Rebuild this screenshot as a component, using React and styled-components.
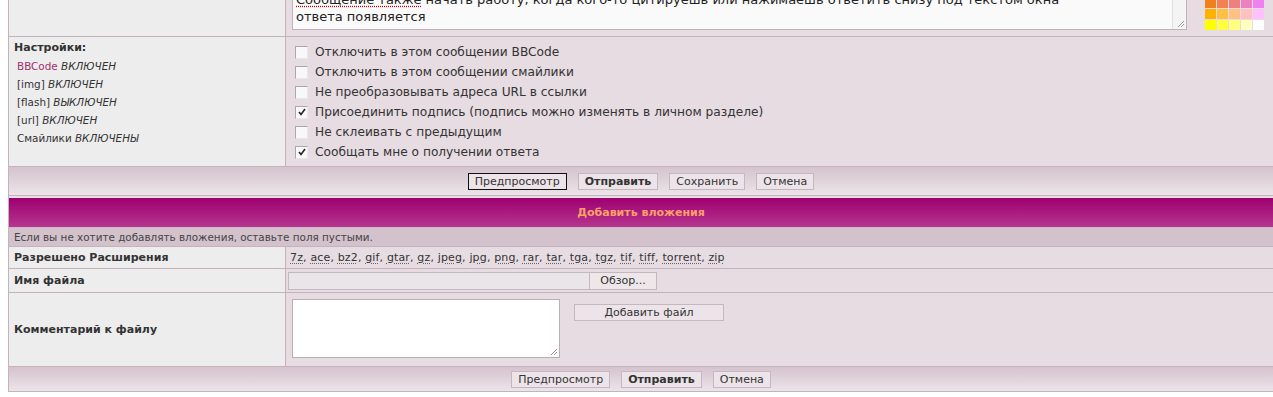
import styled, { createGlobalStyle } from "styled-components"

const GlobalStyle = createGlobalStyle`
    html, body {
        margin: 0;
        padding: 0;
        background: #ffffff;
        overflow: hidden;
    }
    body {
        padding-left: 8px;
        font-family: "DejaVu Sans", Verdana, sans-serif;
        color: #333333;
    }
`

const colors = {
    light: '#ededed',
    pink: '#e6dce2',
    line: '#c4b3bc',
    magentaTop: '#9e0070',
    magentaBottom: '#b5368f',
}

const Forum = styled.div`
    margin-top: -20px;
    border-left: 1px solid ${colors.line};
`

const Row = styled.div`
    display: grid;
    grid-template-columns: 277px 1fr;
    border-bottom: 1px solid ${colors.line};
`

const LeftCell = styled.div`
    background: ${colors.light};
    border-right: 1px solid ${colors.line};
    padding: ${({pad}) => pad || '0 5px'};
    display: flex;
    flex-direction: column;
    justify-content: ${({top}) => top ? 'flex-start' : 'center'};
    font-size: 11px;
    font-weight: ${({bold}) => bold ? 'bold' : 'normal'};
`

const RightCell = styled.div`
    background: ${colors.pink};
    padding: ${({pad}) => pad || '0 4px'};
    display: flex;
    align-items: ${({align}) => align || 'center'};
    gap: ${({gap}) => gap || '0'};
`

const PostArea = styled.div`
    width: 895px;
    height: 50px;
    margin-left: 2px;
    background: #fafafa;
    border: 1px solid #bfb2b8;
    position: relative;
    font-size: 13px;
    line-height: 17px;
    padding: 10px 20px 0 3px;
    box-sizing: border-box;
    color: #222;
    overflow: hidden;
    white-space: nowrap;
`

const Spell = styled.span`
    text-decoration: underline dotted #c00000;
    text-underline-offset: 2px;
`

const Scroll = styled.div`
    position: absolute;
    right: 0;
    top: 0;
    bottom: 0;
    width: 13px;
    border-left: 1px solid #e0e0e0;
    background: #f4f4f4;
`

const Grip = styled.svg`
    position: absolute;
    right: 1px;
    bottom: 1px;
`

const Palette = styled.div`
    margin-left: 18px;
    display: grid;
    grid-template-columns: repeat(5, 11px);
    grid-auto-rows: 10px;
    gap: 1px;
`

const Swatch = styled.div`
    background: ${({c}) => c};
`

const SettingsTitle = styled.div`
    font-weight: bold;
    font-size: 11px;
    margin: 4px 0 3px;
`

const SettingLine = styled.div`
    font-size: 10.4px;
    line-height: 18px;
    padding-left: 3px;
    color: #333;
`

const Code = styled.span`
    color: ${({accent}) => accent ? '#a2306c' : '#333'};
`

const State = styled.i`
    font-style: italic;
`

const Options = styled.div`
    display: flex;
    flex-direction: column;
    padding: 5px 0 4px 9px;
`

const Option = styled.label`
    display: flex;
    align-items: center;
    gap: 7px;
    height: 20px;
    font-size: 12.2px;
    color: #333;
`

const Box = styled.span`
    width: 11px;
    height: 11px;
    border: 1px solid #a8a8a8;
    border-right-color: #e8e8e8;
    border-bottom-color: #e8e8e8;
    background: #f8f8f8;
    display: flex;
    align-items: center;
    justify-content: center;
`

const ButtonBar = styled.div`
    height: ${({h}) => h}px;
    background: linear-gradient(to bottom, #d5c3cd 0%, #ece4e8 100%);
    border-bottom: 1px solid ${colors.line};
    display: flex;
    align-items: center;
    justify-content: center;
    gap: 11px;
`

const Button = styled.button`
    font-family: "DejaVu Sans", Verdana, sans-serif;
    font-size: 11px;
    font-weight: ${({main}) => main ? 'bold' : 'normal'};
    color: #333;
    background: #ece4e8;
    border: 1px solid ${({focus}) => focus ? '#111' : '#c4b8be'};
    height: 17px;
    padding: 0 6px;
    line-height: 15px;
`

const Gap = styled.div`
    height: 2px;
    background: #e9dfe5;
`

const Header = styled.div`
    height: 29px;
    background: linear-gradient(to bottom, ${colors.magentaTop} 0%, ${colors.magentaBottom} 100%);
    color: #ff9f6a;
    font-weight: bold;
    font-size: 11px;
    display: flex;
    align-items: center;
    justify-content: center;
    border-bottom: 1px solid #cdb8c4;
`

const Note = styled.div`
    background: #d3c1cb;
    height: 18px;
    font-size: 10.4px;
    color: #444;
    display: flex;
    align-items: center;
    padding-left: 5px;
    border-bottom: 1px solid ${colors.line};
`

const ExtList = styled.div`
    font-size: 11px;
    letter-spacing: 0.15px;
    color: #333;
`

const Ext = styled.abbr`
    text-decoration: underline dotted #666;
    text-underline-offset: 2px;
`

const FileInput = styled.div`
    width: 367px;
    height: 16px;
    background: #eae5e8;
    border: 1px solid #c4b8be;
    display: flex;
    justify-content: flex-end;
`

const Browse = styled.span`
    width: 66px;
    border-left: 1px solid #c4b8be;
    background: #ede7ea;
    font-size: 11px;
    display: flex;
    align-items: center;
    justify-content: center;
`

const Comment = styled.div`
    width: 266px;
    height: 57px;
    background: #ffffff;
    border: 1px solid #bcaeb5;
    position: relative;
    margin-left: 2px;
`

const AddButton = styled(Button)`
    width: 150px;
    margin-top: 5px;
`

const palette = [
    '#f0801c', '#f28050', '#f08080', '#ec80c0', '#f080f0',
    '#ffb000', '#ffbf40', '#ffc080', '#ffc0c0', '#ffc0ff',
    '#ffff00', '#ffff40', '#ffff80', '#ffffc0', '#ffffff',
]

const settings = [
    { code: 'BBCode', state: 'ВКЛЮЧЕН', accent: true },
    { code: '[img]', state: 'ВКЛЮЧЕН' },
    { code: '[flash]', state: 'ВЫКЛЮЧЕН' },
    { code: '[url]', state: 'ВКЛЮЧЕН' },
    { code: 'Смайлики', state: 'ВКЛЮЧЕНЫ' },
]

const options = [
    { label: 'Отключить в этом сообщении BBCode' },
    { label: 'Отключить в этом сообщении смайлики' },
    { label: 'Не преобразовывать адреса URL в ссылки' },
    { label: 'Присоединить подпись (подпись можно изменять в личном разделе)', checked: true },
    { label: 'Не склеивать с предыдущим' },
    { label: 'Сообщать мне о получении ответа', checked: true },
]

const exts = ['7z', 'ace', 'bz2', 'gif', 'gtar', 'gz', 'jpeg', 'jpg', 'png', 'rar', 'tar', 'tga', 'tgz', 'tif', 'tiff', 'torrent', 'zip']

const GripIcon = () => (
    <Grip width="9" height="9" viewBox="0 0 9 9">
        <path d="M8 2 L2 8 M8 5 L5 8" stroke="#999" strokeWidth="1" />
    </Grip>
)

export default function App() {
    return (
        <>
            <GlobalStyle />
            <Forum>
                <Row>
                    <LeftCell />
                    <RightCell pad="0 4px 6px 4px" align="flex-end">
                        <PostArea>
                            <Spell>Сообщение также</Spell> начать работу, когда кого-то цитируешь или нажимаешь ответить снизу под текстом окна
                            <br />ответа появляется
                            <Scroll />
                            <GripIcon />
                        </PostArea>
                        <Palette>
                            {palette.map((c, i) => <Swatch key={i} c={c} />)}
                        </Palette>
                    </RightCell>
                </Row>

                <Row>
                    <LeftCell top pad="0 5px 0 5px">
                        <SettingsTitle>Настройки:</SettingsTitle>
                        {settings.map((s) => (
                            <SettingLine key={s.code}>
                                <Code accent={s.accent}>{s.code}</Code> <State>{s.state}</State>
                            </SettingLine>
                        ))}
                    </LeftCell>
                    <RightCell align="flex-start" pad="0">
                        <Options>
                            {options.map((o) => (
                                <Option key={o.label}>
                                    <Box>
                                        {o.checked && (
                                            <svg width="8" height="8" viewBox="0 0 8 8">
                                                <path d="M1 4 L3 6.5 L7 1" stroke="#222" strokeWidth="1.6" fill="none" />
                                            </svg>
                                        )}
                                    </Box>
                                    {o.label}
                                </Option>
                            ))}
                        </Options>
                    </RightCell>
                </Row>

                <ButtonBar h={28}>
                    <Button focus>Предпросмотр</Button>
                    <Button main>Отправить</Button>
                    <Button>Сохранить</Button>
                    <Button>Отмена</Button>
                </ButtonBar>
                <Gap />
                <Header>Добавить вложения</Header>
                <Note>Если вы не хотите добавлять вложения, оставьте поля пустыми.</Note>

                <Row>
                    <LeftCell bold pad="4px 5px">Разрешено Расширения</LeftCell>
                    <RightCell>
                        <ExtList>
                            {exts.map((e, i) => (
                                <span key={e}><Ext>{e}</Ext>{i < exts.length - 1 ? ', ' : ''}</span>
                            ))}
                        </ExtList>
                    </RightCell>
                </Row>

                <Row>
                    <LeftCell bold pad="5px 5px">Имя файла</LeftCell>
                    <RightCell pad="0 2px">
                        <FileInput><Browse>Обзор...</Browse></FileInput>
                    </RightCell>
                </Row>

                <Row>
                    <LeftCell bold pad="0 5px">Комментарий к файлу</LeftCell>
                    <RightCell pad="6px 4px 8px 4px" align="flex-start" gap="14px">
                        <Comment><GripIcon /></Comment>
                        <AddButton>Добавить файл</AddButton>
                    </RightCell>
                </Row>

                <ButtonBar h={24}>
                    <Button>Предпросмотр</Button>
                    <Button main>Отправить</Button>
                    <Button>Отмена</Button>
                </ButtonBar>
            </Forum>
        </>
    )
}
